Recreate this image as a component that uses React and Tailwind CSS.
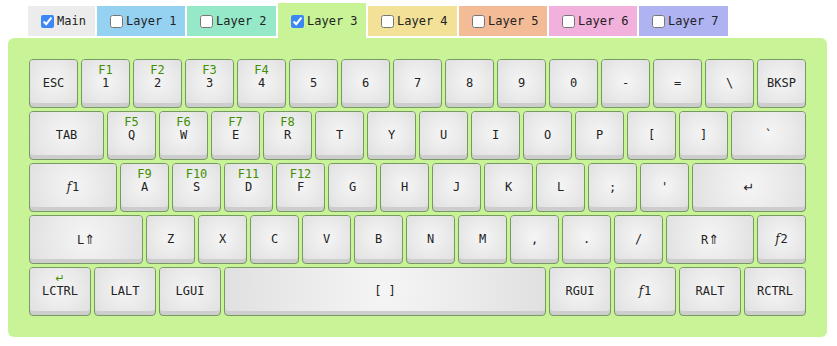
const tabs = [
  { name: "Main", checked: true, bg: "bg-[#ececec]", w: "w-[67px]" },
  { name: "Layer 1", bg: "bg-[#95d2f2]", w: "w-[88px]" },
  { name: "Layer 2", bg: "bg-[#95e9c9]", w: "w-[89px]" },
  { name: "Layer 3", checked: true, active: true, bg: "bg-[#c8f397]", w: "w-[88px]" },
  { name: "Layer 4", bg: "bg-[#f3e197]", w: "w-[89px]" },
  { name: "Layer 5", bg: "bg-[#f3bc97]", w: "w-[88px]" },
  { name: "Layer 6", bg: "bg-[#f2b1dc]", w: "w-[88px]" },
  { name: "Layer 7", bg: "bg-[#b0b3f2]", w: "w-[89px]" },
];

// widths for 1u, 1.25u, 1.5u ... (52px pitch, 3px gap)
const W = {
  1: "w-[49px]",
  1.25: "w-[62px]",
  1.5: "w-[75px]",
  1.75: "w-[88px]",
  2.25: "w-[114px]",
  6.25: "w-[322px]",
};

const rows = [
  [
    ["ESC"], ["1", "F1"], ["2", "F2"], ["3", "F3"], ["4", "F4"], ["5"], ["6"], ["7"],
    ["8"], ["9"], ["0"], ["-"], ["="], ["\\"], ["BKSP"],
  ],
  [
    ["TAB", "", 1.5], ["Q", "F5"], ["W", "F6"], ["E", "F7"], ["R", "F8"], ["T"], ["Y"],
    ["U"], ["I"], ["O"], ["P"], ["["], ["]"], ["`", "", 1.5],
  ],
  [
    ["ƒ1", "", 1.75], ["A", "F9"], ["S", "F10"], ["D", "F11"], ["F", "F12"], ["G"], ["H"],
    ["J"], ["K"], ["L"], [";"], ["'"], ["↵", "", 2.25],
  ],
  [
    ["L⇑", "", 2.25], ["Z"], ["X"], ["C"], ["V"], ["B"], ["N"], ["M"], [","], ["."],
    ["/"], ["R⇑", "", 1.75], ["ƒ2"],
  ],
  [
    ["LCTRL", "↵", 1.25], ["LALT", "", 1.25], ["LGUI", "", 1.25], ["[ ]", "", 6.25],
    ["RGUI", "", 1.25], ["ƒ1", "", 1.25], ["RALT", "", 1.25], ["RCTRL", "", 1.25],
  ],
];

// arrows look tiny in the mono font, so draw them with DejaVu Sans
function Glyphs({ text, small }) {
  if (!text) return null;
  return [...text].map((ch, i) =>
    ch === "⇑" || ch === "↵" ? (
      <span
        key={i}
        className={`font-['DejaVu_Sans'] ${small ? "text-[11px]" : "text-[13px]"}`}
      >
        {ch}
      </span>
    ) : ch === "ƒ" ? (
      <span key={i} className="font-['DejaVu_Serif'] italic mr-[1px]">
        f
      </span>
    ) : (
      ch
    )
  );
}

function Key({ label, legend, size = 1 }) {
  return (
    <div
      className={`${W[size]} h-[49px] rounded-[4px] border border-[#779a62] bg-[#cdcdcd] pb-[4px]`}
    >
      <div className="h-full rounded-[3px] bg-[radial-gradient(circle,#f5f5f5_0%,#e9e9e9_60%,#e0e0e0_100%)] pt-[4px] flex flex-col items-center">
        <div className="h-[13px] leading-[13px] text-[#3f9000]">
          <Glyphs text={legend} small />
        </div>
        <div className="h-[13px] leading-[13px] text-[#222]">
          <Glyphs text={label} />
        </div>
      </div>
    </div>
  );
}

export default function App() {
  return (
    <div
      className="px-[8px] pt-[3px] bg-white text-[12px]"
      style={{ fontFamily: '"DejaVu Sans Mono", monospace' }}
    >
      <div className="flex items-end gap-[2px] ml-[20px]">
        {tabs.map((t) => (
          <label
            key={t.name}
            className={`${t.w} ${t.bg} flex items-center pl-[13px] text-[#222] ${
              t.active ? "h-[35px] pt-[3px] pb-[2px]" : "h-[30px] mb-[2px]"
            }`}
          >
            <input
              type="checkbox"
              defaultChecked={t.checked}
              className="m-0 mr-[3px] w-[13px] h-[13px] accent-[#3b87f5]"
            />
            <span>{t.name}</span>
          </label>
        ))}
      </div>
      <div className="w-[819px] bg-[#c8f397] rounded-[6px] p-[21px] flex flex-col gap-[3px]">
        {rows.map((row, i) => (
          <div key={i} className="flex gap-[3px]">
            {row.map(([label, legend, size], j) => (
              <Key key={j} label={label} legend={legend} size={size || 1} />
            ))}
          </div>
        ))}
      </div>
    </div>
  );
}
